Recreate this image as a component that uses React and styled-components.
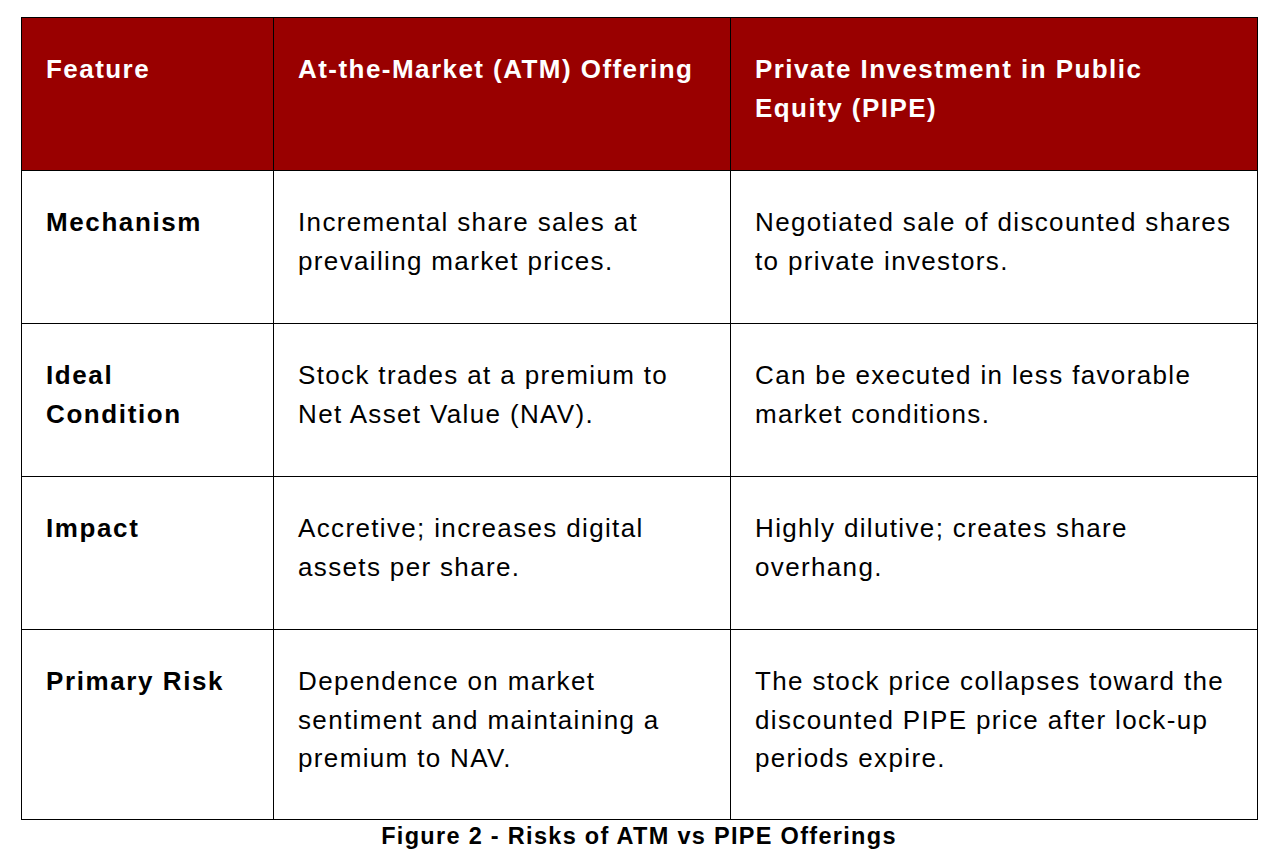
import styled, { createGlobalStyle } from "styled-components";

const GlobalStyle = createGlobalStyle`
  body {
    margin: 0;
    background: #ffffff;
    font-family: "Liberation Sans", Arial, sans-serif;
  }
`;

const rows = [
  {
    feature: "Mechanism",
    atm: "Incremental share sales at prevailing market prices.",
    pipe: "Negotiated sale of discounted shares to private investors.",
  },
  {
    feature: "Ideal Condition",
    atm: "Stock trades at a premium to Net Asset Value (NAV).",
    pipe: "Can be executed in less favorable market conditions.",
  },
  {
    feature: "Impact",
    atm: "Accretive; increases digital assets per share.",
    pipe: "Highly dilutive; creates share overhang.",
  },
  {
    feature: "Primary Risk",
    atm: "Dependence on market sentiment and maintaining a premium to NAV.",
    pipe: "The stock price collapses toward the discounted PIPE price after lock-up periods expire.",
  },
];

const App = () => {
  return (
    <Page>
      <GlobalStyle />
      <Figure>
        <Table>
          <colgroup>
            <col style={{ width: 252 }} />
            <col style={{ width: 457 }} />
            <col style={{ width: 527 }} />
          </colgroup>
          <thead>
            <tr>
              <HeadCell>Feature</HeadCell>
              <HeadCell>At-the-Market (ATM) Offering</HeadCell>
              <HeadCell>Private Investment in Public Equity (PIPE)</HeadCell>
            </tr>
          </thead>
          <tbody>
            {rows.map((row) => {
              return (
                <tr key={row.feature}>
                  <Cell bold>{row.feature}</Cell>
                  <Cell>{row.atm}</Cell>
                  <Cell>{row.pipe}</Cell>
                </tr>
              );
            })}
          </tbody>
        </Table>
        <Caption>Figure 2 - Risks of ATM vs PIPE Offerings</Caption>
      </Figure>
    </Page>
  );
};

const Page = styled.div`
  padding: 17px 0 0 21px;
`;
const Figure = styled.figure`
  margin: 0;
  width: 1236px;
`;
const Table = styled.table`
  width: 1236px;
  table-layout: fixed;
  border-collapse: collapse;
  border: 1px solid #000;
`;
const HeadCell = styled.th`
  background-color: #990000;
  color: #ffffff;
  text-align: left;
  vertical-align: top;
  font-weight: bold;
  font-size: 26px;
  letter-spacing: 1.45px;
  line-height: 38.5px;
  padding: 32px 20px 42px 24px;
  border: 1px solid #000;
  height: 153px;
  box-sizing: border-box;
`;
const Cell = styled.td`
  color: #000;
  font-size: 26px;
  line-height: 38.5px;
  letter-spacing: ${(props) => (props.bold ? "1.6px" : "1.35px")};
  font-weight: ${(props) => (props.bold ? "bold" : "normal")};
  vertical-align: top;
  padding: 32px 20px 41px 24px;
  border: 1px solid #000;
  height: 153px;
  box-sizing: border-box;
`;
const Caption = styled.figcaption`
  text-align: center;
  font-weight: bold;
  font-size: 23.5px;
  letter-spacing: 1.3px;
  line-height: 32px;
  color: #000;
  margin-top: 0;
`;

export default App;
